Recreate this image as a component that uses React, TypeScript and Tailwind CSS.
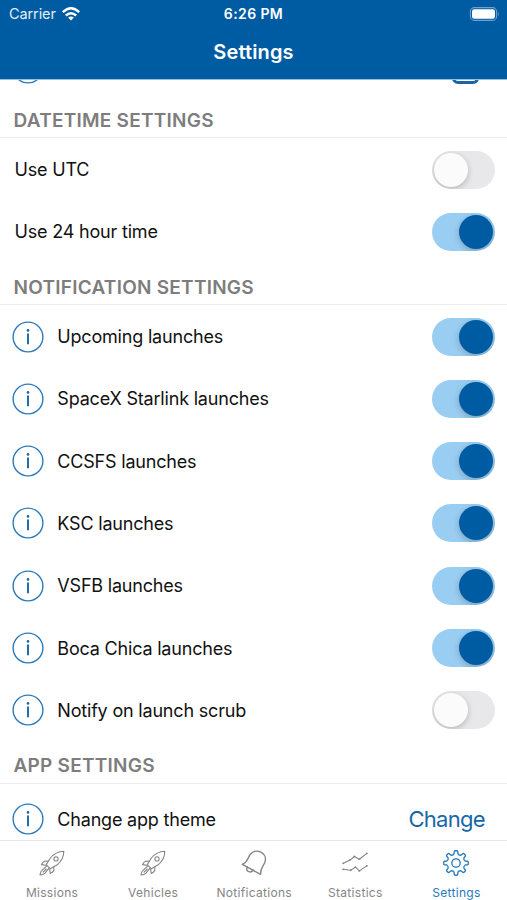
import { useState } from 'react';

const dateRows = [
  { label: 'Use UTC', on: false },
  { label: 'Use 24 hour time', on: true },
];

const notificationRows = [
  { label: 'Upcoming launches', on: true },
  { label: 'SpaceX Starlink launches', on: true },
  { label: 'CCSFS launches', on: true },
  { label: 'KSC launches', on: true },
  { label: 'VSFB launches', on: true },
  { label: 'Boca Chica launches', on: true },
  { label: 'Notify on launch scrub', on: false },
];

function InfoIcon() {
  return (
    <svg viewBox="0 0 32 32" className="h-8 w-8 shrink-0 text-[#1767a9]" fill="none">
      <circle cx="16" cy="16" r="14.9" stroke="#2c7abb" strokeWidth="1.4" />
      <circle cx="16" cy="9.4" r="1.3" fill="currentColor" />
      <path d="M16 12.4v10.8" stroke="currentColor" strokeWidth="1.9" />
    </svg>
  );
}

function Toggle({ label, initial }: { label: string; initial: boolean }) {
  const [on, setOn] = useState(initial);
  return (
    <button
      role="switch"
      aria-checked={on}
      aria-label={label}
      onClick={() => setOn(!on)}
      className={`flex h-[38px] w-[62.5px] shrink-0 items-center overflow-hidden rounded-full px-[2px] ${
        on ? 'justify-end bg-[#99cdf1]' : 'justify-start bg-[#e8e8ea]'
      }`}
    >
      <span
        className={`h-[34px] w-[34px] rounded-full shadow-[0_2px_6px_rgba(0,0,0,0.22)] ${
          on ? 'bg-[#005ca2]' : 'bg-[#fbfbfb]'
        }`}
      />
    </button>
  );
}

function SectionTitle({ children }: { children: string }) {
  return (
    <div className="flex h-[42.3px] shrink-0 items-center border-b border-[#ebebeb] pt-[8px] pl-[13.5px]">
      <h2 className="text-[19px] leading-6 font-semibold tracking-[0.25px] text-[#7d7d7d]">{children}</h2>
    </div>
  );
}

function Row({ label, on, info }: { label: string; on: boolean; info?: boolean }) {
  return (
    <div className={`flex h-[62.3px] shrink-0 items-center pr-[12.5px] ${info ? 'pl-[12.3px]' : 'pl-[14.5px]'}`}>
      {info && <InfoIcon />}
      <span className={`flex-1 text-[18px] tracking-[-0.19px] text-[#111] ${info ? 'pl-[13px]' : ''}`}>{label}</span>
      <Toggle label={label} initial={on} />
    </div>
  );
}

function RocketIcon() {
  return (
    <svg viewBox="0 0 26 26" className="h-[26px] w-[26px]" fill="none" stroke="currentColor" strokeWidth="1.1" strokeLinejoin="round" strokeLinecap="round">
      <path d="M24.8 1.2C19 1.4 14.6 4 11.4 8L7.2 14.6l4.2 4.2 6.7-4C22.2 11.4 24.9 7 24.8 1.2Z" />
      <circle cx="17" cy="8.9" r="2.1" />
      <path d="M9.3 11.3 6 11Q3.7 12 2.5 14.6l4.3.6M14.8 17v3.4q-1.1 2-3.6 3l-.6-4.2" />
      <path d="M7.5 16.1 3 20.4Q.9 22.2 1 25q3.1.1 5-1.9l3.8-4.8" />
      <path d="m7.2 19-3.1 3.1" />
    </svg>
  );
}

function BellIcon() {
  return (
    <svg viewBox="0 0 26 26" className="h-[26px] w-[26px]" fill="none" stroke="currentColor" strokeWidth="1.4" strokeLinejoin="round" strokeLinecap="round">
      <path d="M1.3 14.3C6.7 12.1 6.4 8.5 8.8 5 11.3 1.3 15.6.2 19.4 1.9c4 1.8 5.8 5.7 4.7 9.7-1.1 3.8-4.5 5.6-4.6 12.8Z" />
      <path d="M6.1 16.9c-.8 2.1 0 4 1.7 4.7 1.6.7 3.3.1 4.4-1.6" />
    </svg>
  );
}

function StatisticsIcon() {
  return (
    <svg viewBox="0 0 26 26" className="h-[26px] w-[26px]" fill="none" stroke="currentColor" strokeWidth="1.1" strokeLinejoin="round" strokeLinecap="round">
      <path d="m1.3 13.3 6.7-3.2 4.4-3.6 5 2.7 7.4-5.8M1.3 19.3l7.4 1 4.7-3.2 4 3.8 7.4-5" />
      <g fill="currentColor" stroke="none">
        <circle cx="1.3" cy="13.3" r=".9" />
        <circle cx="8" cy="10.1" r=".9" />
        <circle cx="12.4" cy="6.5" r=".9" />
        <circle cx="17.4" cy="9.2" r=".9" />
        <circle cx="24.8" cy="3.4" r=".9" />
        <circle cx="1.3" cy="19.3" r=".9" />
        <circle cx="8.7" cy="20.3" r=".9" />
        <circle cx="13.4" cy="17.1" r=".9" />
        <circle cx="17.4" cy="20.9" r=".9" />
        <circle cx="24.8" cy="15.9" r=".9" />
      </g>
    </svg>
  );
}

// eight rounded teeth around the hub
const gearPath = Array.from({ length: 8 }, (_, i) => {
  const at = (r: number, deg: number) => {
    const a = ((i * 45 + deg - 90) * Math.PI) / 180;
    return `${(13 + r * Math.cos(a)).toFixed(2)} ${(13 + r * Math.sin(a)).toFixed(2)}`;
  };
  return `${i === 0 ? 'M' : 'L'}${at(9.4, -12)}L${at(11.7, -8.5)}Q${at(12.3, -7)} ${at(12.3, -4)}L${at(12.3, 4)}Q${at(12.3, 7)} ${at(11.7, 8.5)}L${at(9.4, 12)}Q${at(8, 22.5)} ${at(9.4, 33)}`;
}).join('') + 'Z';

function GearIcon() {
  return (
    <svg viewBox="0 0 26 26" className="h-[26px] w-[26px]" fill="none" stroke="currentColor" strokeWidth="1.3" strokeLinejoin="round">
      <path d={gearPath} />
      <circle cx="13" cy="13" r="4.2" />
    </svg>
  );
}

const tabs = [
  { label: 'Missions', Icon: RocketIcon },
  { label: 'Vehicles', Icon: RocketIcon },
  { label: 'Notifications', Icon: BellIcon },
  { label: 'Statistics', Icon: StatisticsIcon },
  { label: 'Settings', Icon: GearIcon, active: true },
];

export default function App() {
  return (
    <div className="flex h-[900px] w-[507px] flex-col overflow-hidden bg-white font-['Inter','Liberation_Sans',sans-serif]">
      <header className="h-[79px] shrink-0 bg-[#005ca2] text-white">
        <div className="grid h-[27px] grid-cols-3 items-center px-[7px] text-[14px]">
          <div className="flex items-center gap-[6px] pl-[2px] text-[#e3eef7]">
            <span className="text-[14.5px] tracking-[-0.1px]">Carrier</span>
            <svg viewBox="0 0 18 14" className="h-[14px] w-[18px]" fill="none" stroke="white" strokeWidth="2.4">
              <path d="M.8 5.2Q9-2.6 17.2 5.2M3.8 8.5q5.2-4.7 10.4 0" />
              <path d="M9 13.5 6.1 10.6q2.9-2.4 5.8 0Z" fill="white" stroke="none" />
            </svg>
          </div>
          <span className="text-center font-semibold tracking-[0.4px]">6:26 PM</span>
          <svg viewBox="0 0 31 14" className="h-[14px] w-[31px] justify-self-end" fill="none">
            <rect x="1.4" y=".6" width="26.2" height="12.8" rx="4" stroke="#6fa3cb" strokeWidth="1.1" />
            <rect x="3" y="2.2" width="23" height="9.6" rx="2.3" fill="white" />
            <path d="M29 4.8q1.7 2.2 0 4.4Z" fill="#6fa3cb" />
          </svg>
        </div>
        <h1 className="pt-[10px] text-center text-[20px] leading-[30px] font-semibold tracking-[0.15px]">Settings</h1>
      </header>

      <main className="flex flex-1 flex-col overflow-hidden">
        {/* bottom edge of the row scrolled under the header */}
        <div className="flex h-[17.2px] shrink-0 items-end justify-between overflow-hidden border-t border-[#8fc1e6] pr-[28px] pb-[12.2px] pl-[12.3px]">
          <InfoIcon />
          <span className="h-[27px] w-[27px] shrink-0 rounded-[6px] border-[3px] border-[#1765a5]" />
        </div>

        <SectionTitle>DATETIME SETTINGS</SectionTitle>
        {dateRows.map((row) => (
          <Row key={row.label} {...row} />
        ))}

        <SectionTitle>NOTIFICATION SETTINGS</SectionTitle>
        {notificationRows.map((row) => (
          <Row key={row.label} {...row} info />
        ))}

        <SectionTitle>APP SETTINGS</SectionTitle>
        <div className="flex h-[70.5px] shrink-0 items-center pr-[22px] pl-[12.3px]">
          <InfoIcon />
          <span className="flex-1 pl-[13px] text-[18px] tracking-[-0.19px] text-[#111]">Change app theme</span>
          <button className="text-[22px] tracking-[-0.7px] text-[#1667a8]">Change</button>
        </div>
      </main>

      <nav className="grid h-[60px] shrink-0 grid-cols-5 border-t border-[#e6e6e6] bg-white pl-[1.5px]">
        {tabs.map(({ label, Icon, active }) => (
          <button
            key={label}
            className={`flex flex-col items-center pt-[9px] text-[12px] tracking-[0.3px] ${
              active ? 'text-[#2679bc]' : 'text-[#858585]'
            }`}
          >
            <Icon />
            <span className="mt-[8px] leading-[18px]">{label}</span>
          </button>
        ))}
      </nav>
    </div>
  );
}
